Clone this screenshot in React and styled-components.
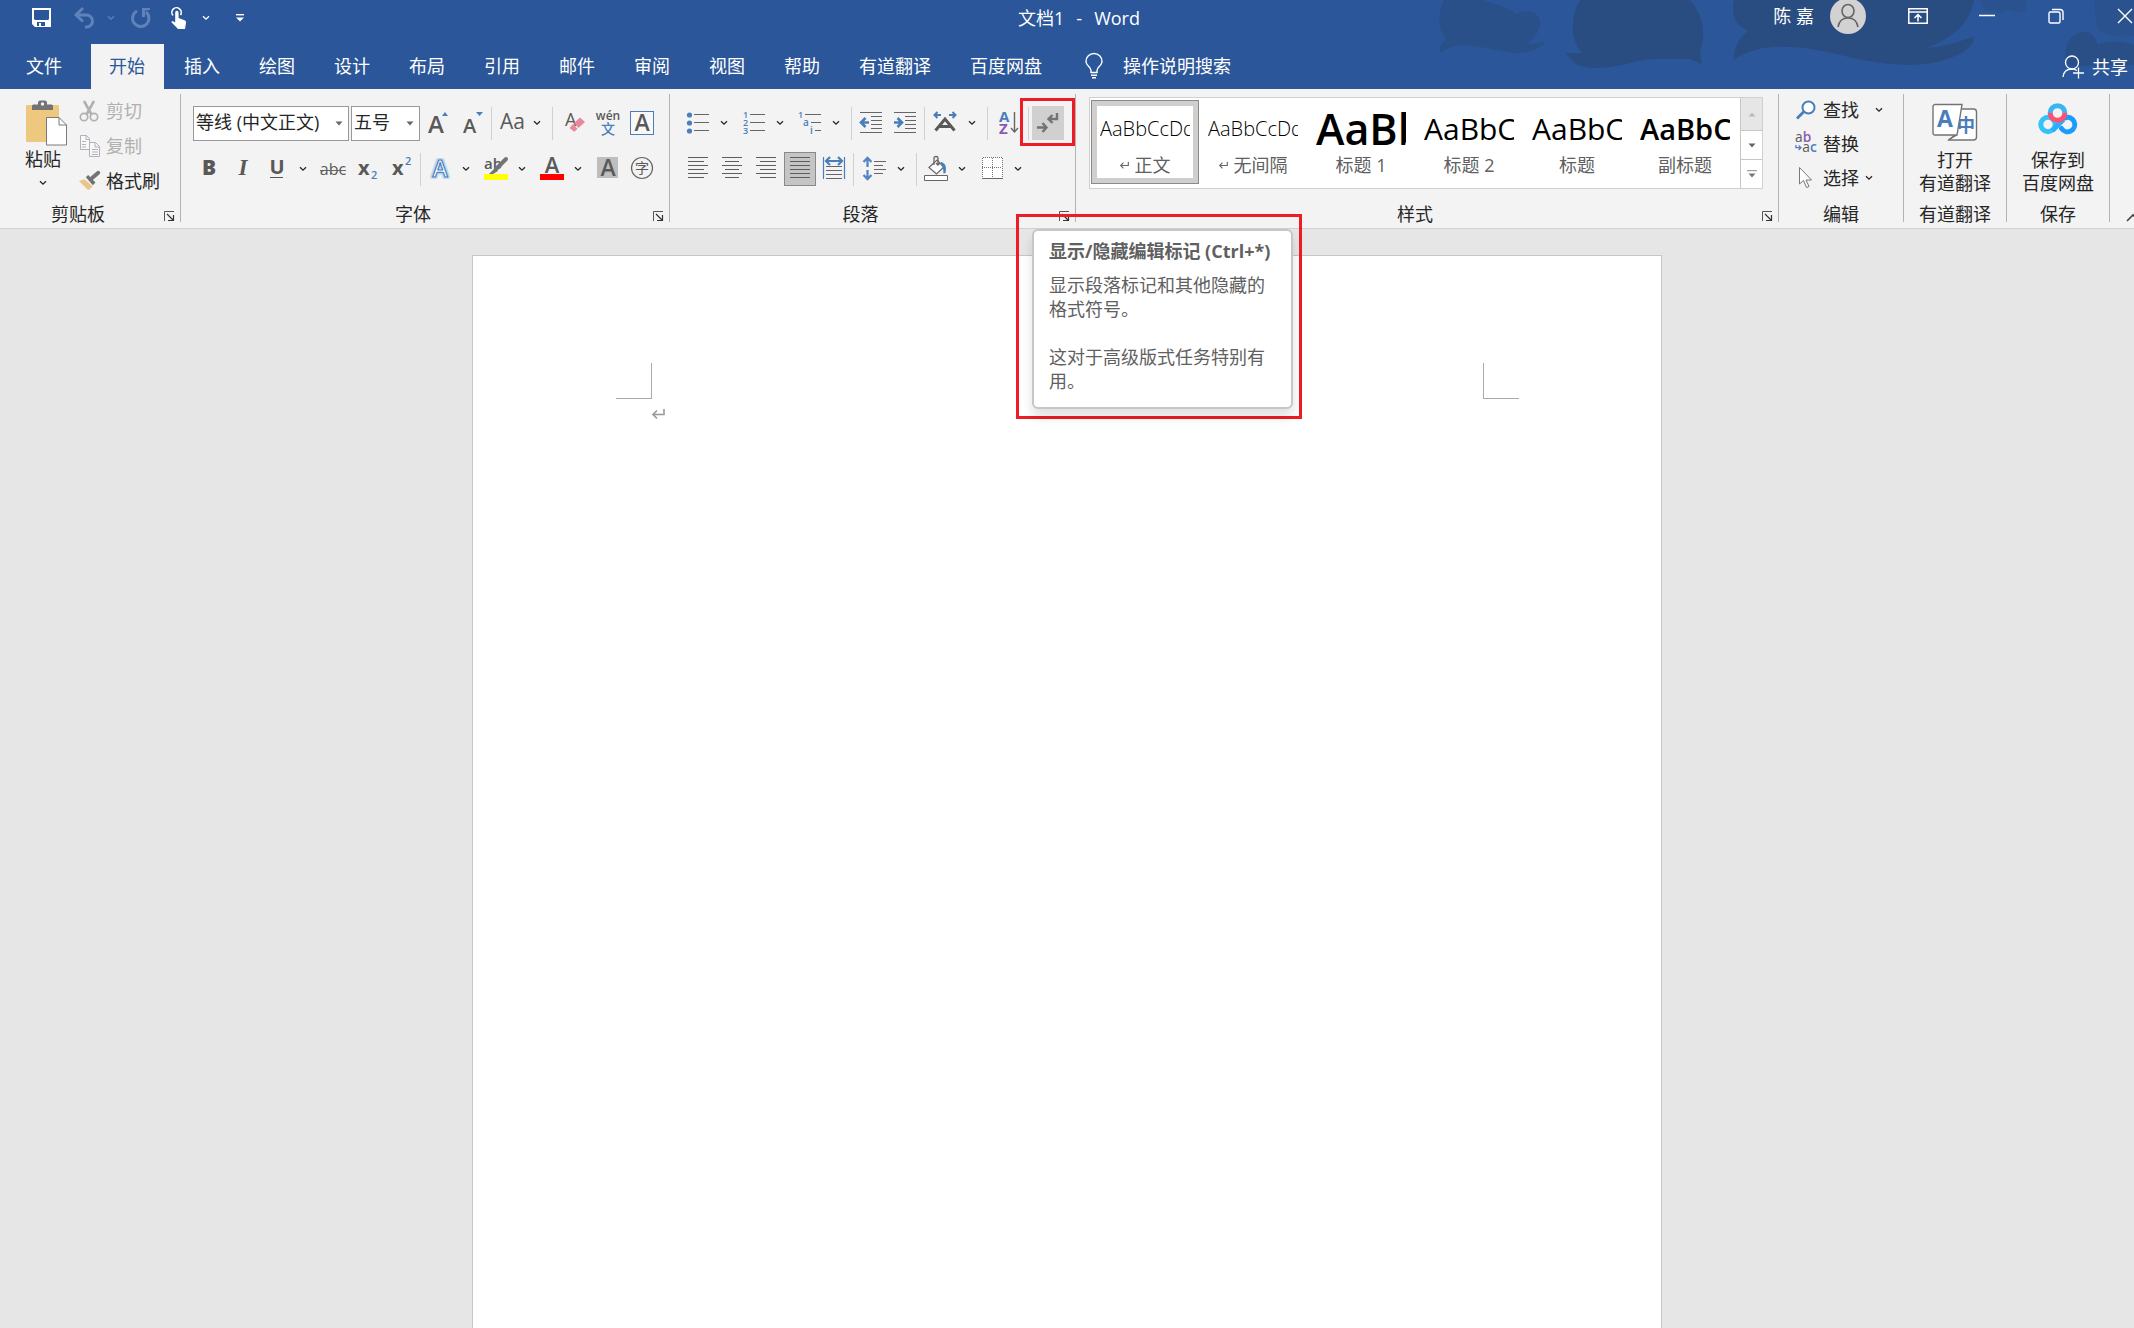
import React from 'react'
import styled, { createGlobalStyle } from 'styled-components'

const TABS = ['插入', '绘图', '设计', '布局', '引用', '邮件', '审阅', '视图', '帮助', '有道翻译', '百度网盘'];

const STYLES = [
    { name: '正文', sample: 'AaBbCcDd', size: 20, weight: 300, mark: true, selected: true },
    { name: '无间隔', sample: 'AaBbCcDd', size: 20, weight: 300, mark: true },
    { name: '标题 1', sample: 'AaBb', size: 43, weight: 600 },
    { name: '标题 2', sample: 'AaBbC', size: 30, weight: 400 },
    { name: '标题', sample: 'AaBbC', size: 30, weight: 400 },
    { name: '副标题', sample: 'AaBbC', size: 29, weight: 600 },
];

const GRAY = '#666666';
const BLUE = '#4a7ebb';

/* ---------- icons ---------- */

function Icon({ w = 24, h = 24, children, ...rest }) {
    return (
        <Svg width={w} height={h} viewBox={`0 0 ${w} ${h}`} fill="none" aria-hidden="true" {...rest}>
            {children}
        </Svg>
    );
}

const ChevronIcon = () => (
    <Icon w={8} h={6}><path d="M1 1.200 4 4.200 7 1.200" stroke="currentColor" strokeWidth="1.300" /></Icon>
);

const CaretIcon = () => (
    <Icon w={8} h={5}><path d="M.5.5h7L4 4.500z" fill="#666" /></Icon>
);

const LauncherIcon = () => (
    <Icon w={12} h={12}>
        <path d="M1.500 11V1.500H11" stroke="#555" />
        <path d="M4 4l6 6M10.500 5v5.500H5" stroke="#333" strokeWidth="1.200" />
    </Icon>
);

const SaveIcon = () => (
    <Icon w={20} h={20}>
        <path fillRule="evenodd" d="M0 0h19v19H3l-3-3zM2 2v9l1 1h13l1-1V2zM5 14v4h2v-3h2v3h4v-4z" fill="#fff" />
    </Icon>
);

const UndoIcon = () => (
    <Icon w={22} h={22}>
        <path d="M2 8h10.500a6 6 0 0 1 0 12H11" stroke="#5f83b8" strokeWidth="3" />
        <path d="M9 1 2 8l7 6.500" stroke="#5f83b8" strokeWidth="3" />
    </Icon>
);

const RedoIcon = () => (
    <Icon w={22} h={22}>
        <path d="M7 4a8.200 8.200 0 1 0 9 1" stroke="#5f83b8" strokeWidth="3" />
        <path d="M12 1h8v2l-5 .5V10h-3z" fill="#5f83b8" />
    </Icon>
);

const TouchIcon = () => (
    <Icon w={18} h={22}>
        <path d="M3 8.500A4.700 4.700 0 1 1 10.500 8" stroke="#fff" strokeWidth="1.600" />
        <path d="M5.200 5.500a1.700 1.700 0 0 1 3.400 0V11l6 2.200c1.200.5 1.600 1.300 1.400 2.600L15 22H8L1.200 15c.8-1.300 2.200-1.100 4 .5z" fill="#fff" />
    </Icon>
);

const CustomizeIcon = () => (
    <Icon w={8} h={8}><path d="M0 .7h8" stroke="#fff" strokeWidth="1.400" /><path d="M0 3.500h8L4 7.500z" fill="#fff" /></Icon>
);

const PersonIcon = () => (
    <Icon w={36} h={36}>
        <circle cx="18" cy="18" r="18" fill="#d2d2d2" />
        <ellipse cx="18" cy="13" rx="6" ry="6.500" stroke="#666" strokeWidth="1.600" />
        <path d="M8 29c1-6 5-9 10-9s9 3 10 9" stroke="#666" strokeWidth="1.600" />
    </Icon>
);

const RibbonOptionsIcon = () => (
    <Icon w={20} h={16}>
        <path d="M.8.8h18.400v14.400H.8zM.8 4h18.400M10 13.500V7M6.500 10 10 6.500l3.500 3.500" stroke="#fff" strokeWidth="1.500" />
    </Icon>
);

const MinimizeIcon = () => (
    <Icon w={16} h={16}><path d="M0 7.500h16" stroke="#fff" strokeWidth="1.500" /></Icon>
);

const RestoreIcon = () => (
    <Icon w={16} h={16}>
        <rect x="1" y="4" width="11" height="11" rx="1.500" stroke="#fff" strokeWidth="1.400" />
        <path d="M4 1.500h8a3 3 0 0 1 3 3V12" stroke="#fff" strokeWidth="1.400" />
    </Icon>
);

const CloseIcon = () => (
    <Icon w={16} h={16}><path d="m1 1 14 14M15 1 1 15" stroke="#fff" strokeWidth="1.400" /></Icon>
);

const BulbIcon = () => (
    <Icon w={18} h={26}>
        <path d="M6 19.500v-2C6 14 1 13 1 8.500a8 8 0 0 1 16 0C17 13 12 14 12 17.500v2zM6 22.200h6M7 24.800h4" stroke="#fff" strokeWidth="1.400" />
    </Icon>
);

const ShareIcon = () => (
    <Icon w={24} h={24}>
        <ellipse cx="10" cy="7.500" rx="6.500" ry="6.500" stroke="#fff" strokeWidth="1.300" />
        <path d="M1 22c.5-5 4-8 9-8 2 0 3.500.5 5 1.500M16.500 12.500v11M11 18h11" stroke="#fff" strokeWidth="1.300" />
    </Icon>
);

const PasteIcon = () => (
    <Icon w={48} h={46}>
        <rect x="7" y="5" width="33" height="37" rx="1" fill="#edc87e" />
        <path d="M13 10V6c0-1 1-1.500 2-1.500h4V2.500c0-1 1-2 2-2h5c1 0 2 1 2 2v2h4c1 0 2 .5 2 1.500v4z" fill="#737373" />
        <circle cx="23.500" cy="4" r="1.700" fill="#f3f3f3" />
        <path d="M27.500 17.500h12.500l7.500 7.500v20h-20z" fill="#fff" stroke="#7a7a7a" />
        <path d="M40 17.500V25h7.500" stroke="#7a7a7a" />
    </Icon>
);

const CutIcon = () => (
    <Icon w={22} h={22}>
        <g stroke="#b1b1b1">
            <circle cx="5" cy="17" r="3.700" strokeWidth="1.700" />
            <circle cx="15" cy="17" r="3.700" strokeWidth="1.700" />
            <path d="M5 1l7.500 13.500M15 1 7.500 14.500" strokeWidth="2.600" />
        </g>
    </Icon>
);

const CopyIcon = () => (
    <Icon w={22} h={22}>
        <g stroke="#b5aebb">
            <path d="M1.500.5h6l3 3v11h-9zM7 .5v4h4M3 6.500h4M3 9.500h4M3 12h4" fill="#f8f8f8" />
            <path d="M10.500 7.500h6l4 4v10h-10z" fill="#f8f8f8" />
            <path d="M16 7.500v4.500h4.500M13 14.500h6M13 17h6M13 19.500h6" />
        </g>
    </Icon>
);

const BrushIcon = () => (
    <Icon w={24} h={22}>
        <path d="M0 11l6-2 9 8-5 4z" fill="#edc487" />
        <path d="M7.500 7 10 4.500l8 8-3 3z" fill="#737373" />
        <path d="m14 8 7-6" stroke="#737373" strokeWidth="4.200" strokeLinecap="round" />
    </Icon>
);

const GrowFontIcon = () => (
    <Icon>
        <Glyph x="2" y="22" $size={24} $weight={600}>A</Glyph>
        <path d="M16 5h6l-3-4z" fill={BLUE} />
    </Icon>
);

const ShrinkFontIcon = () => (
    <Icon>
        <Glyph x="3" y="22" $size={20} $weight={600}>A</Glyph>
        <path d="M16 1h7l-3.500 4z" fill={BLUE} />
    </Icon>
);

const ChangeCaseIcon = () => (
    <Icon w={28}><Glyph x="3" y="18" $size={21}>Aa</Glyph></Icon>
);

const ClearFormatIcon = () => (
    <Icon>
        <Glyph x="3" y="15" $size={18}>A</Glyph>
        <path d="m12 12 6-5.500 5 4.500-6.500 6z" fill="#e8899c" />
        <path d="m11 13 4.500 4.800-2.500 2.500a1 1 0 0 1-1.500 0L7.500 17z" fill="#e8899c" />
    </Icon>
);

const PhoneticIcon = () => (
    <Icon>
        <Glyph x="12" y="9" textAnchor="middle" $size={12} $weight={600}>wén</Glyph>
        <Glyph x="12" y="23" textAnchor="middle" $size={14} $color={BLUE} $weight={500}>文</Glyph>
    </Icon>
);

const CharBorderIcon = () => (
    <Icon>
        <rect x=".5" y=".5" width="23" height="23" fill="#f8f8f8" stroke={BLUE} />
        <Glyph x="12" y="20" textAnchor="middle" $size={23} $weight={600}>A</Glyph>
    </Icon>
);

const BoldIcon = () => <Icon><Glyph x="12" y="18" textAnchor="middle" $size={21} $weight={800}>B</Glyph></Icon>;
const ItalicIcon = () => <Icon><Glyph x="12" y="18" textAnchor="middle" $size={23} $serif $weight={700}>I</Glyph></Icon>;

const UnderlineIcon = () => (
    <Icon>
        <Glyph x="12" y="17" textAnchor="middle" $size={20} $weight={700}>U</Glyph>
        <path d="M5 20.500h13" stroke="#555" />
    </Icon>
);

const StrikeIcon = () => (
    <Icon w={26}>
        <Glyph x="13" y="18" textAnchor="middle" $size={16}>abc</Glyph>
        <path d="M0 13.500h26" stroke={GRAY} />
    </Icon>
);

const SubscriptIcon = () => (
    <Icon>
        <Glyph x="3" y="18" $size={20} $weight={700}>x</Glyph>
        <Glyph x="16" y="22" $size={11} $color={BLUE} $weight={600}>2</Glyph>
    </Icon>
);

const SuperscriptIcon = () => (
    <Icon>
        <Glyph x="3" y="18" $size={20} $weight={700}>x</Glyph>
        <Glyph x="16" y="8" $size={11} $color={BLUE} $weight={600}>2</Glyph>
    </Icon>
);

const TextEffectIcon = () => (
    <Icon>
        <text x="12" y="20" textAnchor="middle" fontFamily="Open Sans" fontSize="23" fontWeight="700" fill="#fff" stroke="#c2daf0" strokeWidth="4" strokeLinejoin="round">
            A
            <tspan x="12" strokeWidth="1.200" stroke={BLUE} fontWeight="600">A</tspan>
        </text>
    </Icon>
);

const HighlightIcon = () => (
    <Icon>
        <Glyph x="0" y="12" $size={15} $weight={600}>ab</Glyph>
        <path d="m22 2-10 10" stroke="#737373" strokeWidth="4" strokeLinecap="round" />
        <path d="m11 11 3 3-5 3H5z" fill="#737373" />
        <path d="M0 17h24v6H0z" fill="#ff0" />
    </Icon>
);

const FontColorIcon = () => (
    <Icon>
        <Glyph x="12" y="16" textAnchor="middle" $size={22} $weight={600}>A</Glyph>
        <path d="M0 17h24v6H0z" fill="red" />
    </Icon>
);

const ShadingTextIcon = () => (
    <Icon>
        <path d="M1 0h21v21H1z" fill="#bebebe" />
        <Glyph x="12" y="19" textAnchor="middle" $size={23} $weight={600}>A</Glyph>
    </Icon>
);

const CircleTextIcon = () => (
    <Icon>
        <circle cx="12" cy="11" r="10.500" stroke={GRAY} strokeWidth="1.200" />
        <Glyph x="12" y="16" textAnchor="middle" $size={14}>字</Glyph>
    </Icon>
);

const BulletsIcon = () => (
    <Icon>
        <g fill={BLUE}><circle cx="3.500" cy="4" r="2.600" /><circle cx="3.500" cy="12" r="2.600" /><circle cx="3.500" cy="20" r="2.600" /></g>
        <path d="M8 3.500h15M8 11.500h15M8 19.500h15" stroke={GRAY} />
    </Icon>
);

const NumberingIcon = () => (
    <Icon>
        <Glyph x="1" y="7" $size={9} $color={BLUE} $weight={600}>1</Glyph>
        <Glyph x="1" y="15" $size={9} $color={BLUE} $weight={600}>2</Glyph>
        <Glyph x="1" y="23" $size={9} $color={BLUE} $weight={600}>3</Glyph>
        <path d="M8 3.500h15M8 11.500h15M8 19.500h15" stroke={GRAY} />
    </Icon>
);

const MultilevelIcon = () => (
    <Icon>
        <Glyph x="0" y="7" $size={9} $color={BLUE} $weight={600}>1</Glyph>
        <Glyph x="5" y="15" $size={10} $color={BLUE} $weight={600}>a</Glyph>
        <Glyph x="12" y="23" $size={10} $color={BLUE} $weight={600}>i</Glyph>
        <path d="M7 3.500h16M13 11.500h10M17 19.500h6" stroke={GRAY} />
    </Icon>
);

const OutdentIcon = () => (
    <Icon>
        <path d="M1 1.500h22M12 5.500h11M12 9.500h11M12 13.500h11M12 17.500h11M1 21.500h22" stroke={GRAY} />
        <path d="M10 11.500H2M6.500 7 2 11.500 6.500 16" stroke={BLUE} strokeWidth="2.600" />
    </Icon>
);

const IndentIcon = () => (
    <Icon>
        <path d="M1 1.500h22M12 5.500h11M12 9.500h11M12 13.500h11M12 17.500h11M1 21.500h22" stroke={GRAY} />
        <path d="M1 11.500h8M4.500 7 9 11.500 4.500 16" stroke={BLUE} strokeWidth="2.600" />
    </Icon>
);

const AsianLayoutIcon = () => (
    <Icon>
        <path d="M2.500 19.500 12 8l9.500 11.500M6 15.500h12" stroke="#595959" strokeWidth="3" />
        <path d="M8 4H1.500M4.500 1l-3 3 3 3M16 4h6.500M19.500 1l3 3-3 3" stroke={BLUE} strokeWidth="2" />
    </Icon>
);

const SortIcon = () => (
    <Icon>
        <Glyph x="3" y="11" $size={15} $color={BLUE} $weight={700}>A</Glyph>
        <Glyph x="3" y="23" $size={15} $color="#8a5ab0" $weight={700}>Z</Glyph>
        <path d="M18.500 1v20M15 17l3.500 4 3.500-4" stroke={GRAY} strokeWidth="1.400" />
    </Icon>
);

const MarksIcon = () => (
    <Icon>
        <path d="M21 2v6h-8M16.500 4 12.500 8l4 4" stroke="#737373" strokeWidth="2.400" />
        <path d="M1 16.500h9M6.500 12l4 4.500-4 4.500" stroke="#737373" strokeWidth="2.400" />
    </Icon>
);

const ALIGN = {
    left: [[2, 22], [2, 18], [2, 22], [2, 18], [2, 22], [2, 18]],
    center: [[2, 22], [5, 19], [2, 22], [5, 19], [2, 22], [5, 19]],
    right: [[2, 22], [6, 22], [2, 22], [6, 22], [2, 22], [6, 22]],
    justify: [[2, 22], [2, 22], [2, 22], [2, 22], [2, 22], [2, 22]],
};

function AlignIcon({ type }) {
    const d = ALIGN[type].map(([a, b], i) => `M${a} ${i * 4 + 0.5}H${b}`).join('');
    return <Icon><path d={d} stroke="#5e5e5e" /></Icon>;
}

const DistributeIcon = () => (
    <Icon>
        <path d="M1.500 0v22M22.500 0v22" stroke={BLUE} strokeWidth="1.200" />
        <path d="M4 4h16M8 0 4 4l4 4M16 0l4 4-4 4" stroke={BLUE} strokeWidth="2.200" />
        <path d="M4 9.500h16M4 13.500h16M4 17.500h16M4 21.500h16" stroke={GRAY} />
    </Icon>
);

const LineSpacingIcon = () => (
    <Icon>
        <path d="M5.500 1v9M1.500 5l4-4 4 4M5.500 13v9M1.500 18l4 4 4-4" stroke="#5585c8" strokeWidth="2.300" />
        <path d="M12 4.500h12M12 8.500h9M12 12.500h12M12 16.500h9" stroke={GRAY} />
    </Icon>
);

const BucketIcon = () => (
    <Icon w={26} h={26}>
        <path d="M6 11.500 14 4l7 7-7.500 7z" fill="#fff" stroke={GRAY} strokeWidth="1.200" />
        <path d="M11 9V2c0-2 4-2 4 0v6M13 7l2 2 2-2" stroke={GRAY} strokeWidth="1.300" />
        <path d="M18 6c4 1 6 4 4.500 11l-2 .5c-.5-2 .8-5-3-9z" fill={BLUE} />
        <path d="M1.500 19.500h23v5h-23z" fill="#fff" stroke={GRAY} />
    </Icon>
);

const BordersIcon = () => (
    <Icon>
        <path d="M2 1h20v20H2z" fill="#fff" />
        <path d="M2.500 20V.5h20V20M12.500 1v20M2 10.500h20" stroke="#777" strokeDasharray="1 1" />
        <path d="M2 21.500h21" stroke="#666" />
    </Icon>
);

const FindIcon = () => (
    <Icon w={22} h={20}>
        <circle cx="13.500" cy="7.500" r="6" fill="#fff" stroke={BLUE} strokeWidth="2" />
        <path d="m9 11.500-7 7" stroke={BLUE} strokeWidth="2.800" />
    </Icon>
);

const ReplaceIcon = () => (
    <Icon w={24} h={22}>
        <Glyph x="0" y="9" $size={15}>a<tspan fill="#8a5ab0" fontWeight="600">b</tspan></Glyph>
        <Glyph x="8" y="20" $size={15}>a<tspan fill={BLUE} fontWeight="600">c</tspan></Glyph>
        <path d="M1 12v3h5M4 12.500 6.500 15 4 17.500" stroke={BLUE} strokeWidth="1.400" />
    </Icon>
);

const SelectIcon = () => (
    <Icon w={22} h={22}>
        <path d="M4.500.5v16.500l4-3.500 3 7 2.500-1-3-6.500h5.500z" fill="#fff" stroke="#777" />
    </Icon>
);

const YoudaoIcon = () => (
    <Icon w={46} h={40}>
        <path d="M24 6h17.500c2 0 3 1 3 3v25c0 2-1 3-3 3H17l9-8" fill="#fff" stroke="#737373" strokeWidth="1.400" />
        <Glyph x="25" y="29" $size={18} $color={BLUE} $weight={700}>中</Glyph>
        <path d="M3 1.500h27L25 32H3c-1.500 0-2-1-2-2V3.500c0-1 .8-2 2-2zM17 37v-.5l8-4.500" fill="#fff" stroke="#737373" strokeWidth="1.400" />
        <Glyph x="5" y="24" $size={23} $color={BLUE} $weight={700}>A</Glyph>
    </Icon>
);

const BaiduIcon = () => (
    <Icon w={40} h={32}>
        <path d="M12.200 10a7.300 7.300 0 0 1 14.600 0" stroke="#3ab4f2" strokeWidth="5" />
        <circle cx="10" cy="21.500" r="7.200" stroke="#33c3fb" strokeWidth="5" />
        <path d="M23.500 25.500a7.200 7.200 0 1 0 3.500-10.700" stroke="#1a9cff" strokeWidth="5" strokeLinecap="round" />
        <path d="m14.500 27.500 11-11" stroke="#29aefc" strokeWidth="5" />
        <path d="M12.200 10a7.300 7.300 0 0 0 14.600 0" stroke="#ff5273" strokeWidth="5" />
    </Icon>
);

const ReturnMark = ({ w = 13, color = '#999' }) => (
    <Svg width={w} height={w} viewBox="0 0 13 13" fill="none" aria-hidden="true">
        <path d="M12 1v5.500H1M5 2.500l-4 4 4 4" stroke={color} strokeWidth="1.600" />
    </Svg>
);

const Clouds = () => (
    <CloudArt width="714" height="89" viewBox="0 0 714 89" aria-hidden="true">
        <g fill="#2a4d81">
            <path opacity=".65" d="M24 0c-8 16-5 32 2 39-5 5-7 8-6 14 20-16 50-2 76 0 13 0 24-3 30-12-6 1-12 3-20 3 14-8 18-24 10-30-8-4-14-3-20 0C90 8 76 4 62 0z" />
            <path d="M160 0c-8 14-12 36 2 53-6 1-12 0-16-1 4 11 16 17 30 16 22 0 40-8 58-9h36l12 6-2-14c6-16 4-36-10-51z" />
            <path d="M314 0c-4 16 4 28 14 31-10 8-14 16-14 29 30-22 80-12 118-2 28 6 66 11 92 2 20-6 30-14 30-23-12 3-28 10-48 11 24-8 44-24 48-48z" />
            <path opacity=".8" d="M650 66c-10-14-2-34 14-34 10 0 12 8 14 13 10-5 24-4 36 0v20z" />
            <path opacity=".5" d="M560 0c2 10 8 14 14 10 4 6 10 3 14 0 6 2 12 4 18 0V0zM674 0c2 14 0 26 8 32 10 5 20 5 32 4V0z" />
        </g>
    </CloudArt>
);

/* ---------- small building blocks ---------- */

function Menu({ label }) {
    return <MenuButton type="button" aria-label={label}><ChevronIcon /></MenuButton>;
}

function Footer({ children, launcher }) {
    return (
        <GroupFooter>
            <GroupLabel>{children}</GroupLabel>
            {launcher && <Launcher type="button" aria-label={`${children}设置`}><LauncherIcon /></Launcher>}
        </GroupFooter>
    );
}

function Combo({ label, options, width }) {
    return (
        <ComboBox $width={width}>
            <select aria-label={label}>
                {options.map(option => <option key={option}>{option}</option>)}
            </select>
            <CaretIcon />
        </ComboBox>
    );
}

function TitleBar() {
    return (
        <TitleRow>
            <QuickAccess>
                <QuickButton type="button" aria-label="保存" $width={42}><SaveIcon /></QuickButton>
                <QuickButton type="button" aria-label="撤消" $width={44}><UndoIcon /></QuickButton>
                <QuickButton type="button" aria-label="撤消列表" $width={8} $dim><ChevronIcon /></QuickButton>
                <QuickButton type="button" aria-label="恢复" $width={52}><RedoIcon /></QuickButton>
                <QuickButton type="button" aria-label="触摸/鼠标模式" $width={24}><TouchIcon /></QuickButton>
                <QuickButton type="button" aria-label="模式列表" $width={30}><ChevronIcon /></QuickButton>
                <QuickButton type="button" aria-label="自定义快速访问工具栏" $width={38}><CustomizeIcon /></QuickButton>
            </QuickAccess>
            <Title><span>文档1</span><span>-</span><span>Word</span></Title>
            <WindowControls>
                <Account type="button">陈 嘉<PersonIcon /></Account>
                <WindowButton type="button" aria-label="功能区显示选项"><RibbonOptionsIcon /></WindowButton>
                <WindowButton type="button" aria-label="最小化"><MinimizeIcon /></WindowButton>
                <WindowButton type="button" aria-label="向下还原"><RestoreIcon /></WindowButton>
                <WindowButton type="button" aria-label="关闭"><CloseIcon /></WindowButton>
            </WindowControls>
        </TitleRow>
    );
}

function TabBar() {
    return (
        <TabRow>
            <FileTab type="button">文件</FileTab>
            <Tab type="button" $active>开始</Tab>
            {TABS.map(tab => <Tab type="button" key={tab}>{tab}</Tab>)}
            <TellMe>
                <BulbIcon />
                <input aria-label="操作说明搜索" placeholder="操作说明搜索" />
            </TellMe>
            <Share type="button"><ShareIcon />共享</Share>
        </TabRow>
    );
}

function ClipboardGroup() {
    return (
        <Group>
            <ClipboardBody>
                <PasteButton type="button">
                    <PasteIcon />
                    <span>粘贴</span>
                    <ChevronIcon />
                </PasteButton>
                <Stack>
                    <TextButton type="button" disabled><CutIcon />剪切</TextButton>
                    <TextButton type="button" disabled><CopyIcon />复制</TextButton>
                    <TextButton type="button"><BrushIcon />格式刷</TextButton>
                </Stack>
            </ClipboardBody>
            <Footer launcher>剪贴板</Footer>
        </Group>
    );
}

function FontGroup() {
    return (
        <Group>
            <Rows>
                <ToolRow>
                    <Combo label="字体" width={156} options={['等线 (中文正文)']} />
                    <Combo label="字号" width={69} options={['五号']} />
                    <Tool type="button" aria-label="增大字号"><GrowFontIcon /></Tool>
                    <Tool type="button" aria-label="减小字号"><ShrinkFontIcon /></Tool>
                    <Divider />
                    <Tool type="button" aria-label="更改大小写"><ChangeCaseIcon /></Tool>
                    <Menu label="更改大小写列表" />
                    <Divider />
                    <ToolEnd>
                        <Tool type="button" aria-label="清除所有格式"><ClearFormatIcon /></Tool>
                        <Tool type="button" aria-label="拼音指南"><PhoneticIcon /></Tool>
                        <Tool type="button" aria-label="字符边框"><CharBorderIcon /></Tool>
                    </ToolEnd>
                </ToolRow>
                <ToolRow>
                    <Tool type="button" aria-label="加粗"><BoldIcon /></Tool>
                    <Tool type="button" aria-label="倾斜"><ItalicIcon /></Tool>
                    <Tool type="button" aria-label="下划线"><UnderlineIcon /></Tool>
                    <Menu label="下划线列表" />
                    <Tool type="button" aria-label="删除线"><StrikeIcon /></Tool>
                    <Tool type="button" aria-label="下标"><SubscriptIcon /></Tool>
                    <Tool type="button" aria-label="上标"><SuperscriptIcon /></Tool>
                    <Divider />
                    <Tool type="button" aria-label="文本效果"><TextEffectIcon /></Tool>
                    <Menu label="文本效果列表" />
                    <Tool type="button" aria-label="突出显示"><HighlightIcon /></Tool>
                    <Menu label="突出显示颜色" />
                    <Tool type="button" aria-label="字体颜色"><FontColorIcon /></Tool>
                    <Menu label="字体颜色列表" />
                    <Tool type="button" aria-label="字符底纹"><ShadingTextIcon /></Tool>
                    <Tool type="button" aria-label="带圈字符"><CircleTextIcon /></Tool>
                </ToolRow>
            </Rows>
            <Footer launcher>字体</Footer>
        </Group>
    );
}

function ParagraphGroup() {
    return (
        <Group>
            <Rows>
                <ToolRow>
                    <Tool type="button" aria-label="项目符号"><BulletsIcon /></Tool>
                    <Menu label="项目符号列表" />
                    <Tool type="button" aria-label="编号"><NumberingIcon /></Tool>
                    <Menu label="编号列表" />
                    <Tool type="button" aria-label="多级列表"><MultilevelIcon /></Tool>
                    <Menu label="多级列表选项" />
                    <Divider />
                    <Tool type="button" aria-label="减少缩进量"><OutdentIcon /></Tool>
                    <Tool type="button" aria-label="增加缩进量"><IndentIcon /></Tool>
                    <Divider />
                    <Tool type="button" aria-label="中文版式" $width={36}><AsianLayoutIcon /></Tool>
                    <Menu label="中文版式列表" />
                    <Divider />
                    <Tool type="button" aria-label="排序" $width={36}><SortIcon /></Tool>
                    <Divider />
                    <MarksAnchor>
                        <Tool type="button" aria-label="显示/隐藏编辑标记" $hover><MarksIcon /></Tool>
                        <MarksFrame />
                        <TipFrame>
                            <Tip role="tooltip">
                                <h2>显示/隐藏编辑标记 (Ctrl+*)</h2>
                                <p>显示段落标记和其他隐藏的格式符号。</p>
                                <p>这对于高级版式任务特别有用。</p>
                            </Tip>
                        </TipFrame>
                    </MarksAnchor>
                </ToolRow>
                <ToolRow>
                    <Tool type="button" aria-label="左对齐"><AlignIcon type="left" /></Tool>
                    <Tool type="button" aria-label="居中"><AlignIcon type="center" /></Tool>
                    <Tool type="button" aria-label="右对齐"><AlignIcon type="right" /></Tool>
                    <Tool type="button" aria-label="两端对齐" aria-pressed="true" $pressed><AlignIcon type="justify" /></Tool>
                    <Tool type="button" aria-label="分散对齐"><DistributeIcon /></Tool>
                    <Divider />
                    <Tool type="button" aria-label="行和段落间距" $width={36}><LineSpacingIcon /></Tool>
                    <Menu label="行和段落间距列表" />
                    <Divider />
                    <Tool type="button" aria-label="底纹"><BucketIcon /></Tool>
                    <Menu label="底纹颜色" />
                    <Tool type="button" aria-label="边框"><BordersIcon /></Tool>
                    <Menu label="边框列表" />
                </ToolRow>
            </Rows>
            <Footer launcher>段落</Footer>
        </Group>
    );
}

function StylesGroup() {
    return (
        <Group $grow>
            <Gallery>
                <StyleList>
                    {STYLES.map(item => (
                        <StyleItem type="button" key={item.name} $selected={item.selected}>
                            <Sample $size={item.size} $weight={item.weight}>{item.sample}</Sample>
                            <StyleName>{item.mark && <ReturnMark w={9} color="#666" />}{item.name}</StyleName>
                        </StyleItem>
                    ))}
                </StyleList>
                <GalleryScroll>
                    <button type="button" aria-label="上一行" disabled>
                        <Icon w={8} h={5}><path d="M.5 4.500h7L4 .5z" fill="#bbb" /></Icon>
                    </button>
                    <button type="button" aria-label="下一行"><CaretIcon /></button>
                    <button type="button" aria-label="其他">
                        <Icon w={10} h={8}><path d="M0 .7h10" stroke="#888" /><path d="M1.500 3.500h7L5 7.500z" fill="#777" /></Icon>
                    </button>
                </GalleryScroll>
            </Gallery>
            <Footer launcher>样式</Footer>
        </Group>
    );
}

function App() {
    return (
        <>
            <GlobalStyle />
            <Window>
                <Header>
                    <Clouds />
                    <TitleBar />
                    <TabBar />
                </Header>
                <Ribbon>
                    <ClipboardGroup />
                    <FontGroup />
                    <ParagraphGroup />
                    <StylesGroup />
                    <Group>
                        <EditStack>
                            <TextButton type="button"><FindIcon />查找<Wide><ChevronIcon /></Wide></TextButton>
                            <TextButton type="button"><ReplaceIcon />替换</TextButton>
                            <TextButton type="button"><SelectIcon />选择<ChevronIcon /></TextButton>
                        </EditStack>
                        <Footer>编辑</Footer>
                    </Group>
                    <Group>
                        <BigButton type="button"><YoudaoIcon /><span>打开<br />有道翻译</span></BigButton>
                        <Footer>有道翻译</Footer>
                    </Group>
                    <Group>
                        <BigButton type="button"><BaiduIcon /><span>保存到<br />百度网盘</span></BigButton>
                        <Footer>保存</Footer>
                    </Group>
                    <Collapse type="button" aria-label="折叠功能区">
                        <Icon w={14} h={9}><path d="m1 8 6-6 6 6" stroke="#444" strokeWidth="1.600" /></Icon>
                    </Collapse>
                </Ribbon>
                <Workspace>
                    <Page>
                        <Corners><Corner $side="right" /><Corner $side="left" /></Corners>
                        <Paragraph><ReturnMark /></Paragraph>
                    </Page>
                </Workspace>
            </Window>
        </>
    );
}

export default App

const GlobalStyle = createGlobalStyle`
    * {
        box-sizing: border-box;
    }
    body {
        margin: 0;
        overflow: hidden;
        font: 18px/24px "Open Sans", "Noto Sans CJK SC", sans-serif;
        color: #262626;
    }
    button, select, input {
        font: inherit;
        color: inherit;
        background: none;
        border: 0;
        padding: 0;
        margin: 0;
    }
`;

const Svg = styled.svg`
    display: block;
    flex: none;
    overflow: visible;
`;

const Glyph = styled.text`
    font-family: ${props => props.$serif ? '"Liberation Serif", serif' : '"Open Sans", "Noto Sans CJK SC", sans-serif'};
    font-style: ${props => props.$serif ? 'italic' : 'normal'};
    font-size: ${props => props.$size}px;
    font-weight: ${props => props.$weight || 400};
    fill: ${props => props.$color || '#595959'};
`;

const Window = styled.div`
    display: flex;
    flex-direction: column;
    height: 100vh;
`;

const Header = styled.header`
    position: relative;
    background: #2b579a;
    color: #fff;
`;

const CloudArt = styled.svg`
    position: absolute;
    top: 0;
    right: 0;
`;

const TitleRow = styled.div`
    position: relative;
    display: grid;
    grid-template-columns: 1fr auto 1fr;
    height: 44px;
`;

const QuickAccess = styled.div`
    display: flex;
    align-items: center;
    height: 36px;
    padding-left: 21px;
`;

const QuickButton = styled.button`
    display: flex;
    align-items: center;
    justify-content: center;
    width: ${props => props.$width}px;
    height: 32px;
    color: ${props => props.$dim ? '#5f83b8' : '#fff'};
`;

const Title = styled.div`
    display: flex;
    gap: 12px;
    padding: 6px 0 0 24px;
`;

const WindowControls = styled.div`
    display: flex;
    justify-content: flex-end;
    height: 32px;
    align-items: center;
    margin-right: -25px;
`;

const Account = styled.button`
    display: flex;
    align-items: center;
    gap: 16px;
    margin-right: 17px;
`;

const WindowButton = styled.button`
    display: flex;
    align-items: center;
    justify-content: center;
    width: 69px;
    height: 32px;
`;

const TabRow = styled.nav`
    position: relative;
    display: flex;
    gap: 2px;
    height: 45px;
    padding-left: 8px;
`;

const Tab = styled.button`
    flex: none;
    padding: 0 19px 2px 18px;
    background: ${props => props.$active ? '#f3f3f3' : 'transparent'};
    color: ${props => props.$active ? '#2b579a' : '#fff'};
`;

const FileTab = styled(Tab)`
    margin-right: 8px;
`;

const TellMe = styled.label`
    display: flex;
    align-items: center;
    gap: 20px;
    margin-left: 22px;
    padding-bottom: 2px;
    > input {
        width: 130px;
        outline: none;
    }
    > input::placeholder {
        color: #fff;
        opacity: 1;
    }
`;

const Share = styled.button`
    display: flex;
    align-items: center;
    gap: 6px;
    margin-left: auto;
    padding-right: 6px;
`;

const Ribbon = styled.section`
    position: relative;
    z-index: 1;
    display: flex;
    flex: none;
    height: 140px;
    padding: 5px 0 6px;
    background: #f3f3f3;
    border-bottom: 1px solid #d0d0d0;
`;

const Group = styled.div`
    display: flex;
    flex-direction: column;
    flex: ${props => props.$grow ? '1 1 0' : 'none'};
    min-width: 0;
    border-right: 1px solid #b3b3b3;
`;

const GroupFooter = styled.div`
    display: flex;
    align-items: center;
    height: 16px;
    margin-top: auto;
`;

const GroupLabel = styled.div`
    flex: 1;
    text-align: center;
`;

const Launcher = styled.button`
    width: 24px;
    padding: 4px 0 0 7px;
`;

const ClipboardBody = styled.div`
    display: flex;
    gap: 12px;
    padding: 0 20px 0 19px;
`;

const PasteButton = styled.button`
    display: flex;
    flex-direction: column;
    align-items: center;
    width: 48px;
    padding-top: 6px;
    > span {
        margin: 1px 0 9px;
    }
`;

const Stack = styled.div`
    display: flex;
    flex-direction: column;
`;

const EditStack = styled(Stack)`
    padding: 0 20px 0 16px;
`;

const TextButton = styled.button`
    display: flex;
    align-items: center;
    gap: 5px;
    height: 35px;
    padding-bottom: 2px;
    color: ${props => props.disabled ? '#b1b1b1' : 'inherit'};
    > svg:first-child {
        width: 22px;
    }
    ${EditStack} & {
        gap: 6px;
        height: 34px;
    }
`;

const Wide = styled.span`
    padding-left: 10px;
`;

const Rows = styled.div`
    display: flex;
    flex-direction: column;
    gap: 12px;
    padding: 12px 10px 0 11px;
`;

const ToolRow = styled.div`
    display: flex;
    align-items: center;
    height: 34px;
`;

const Tool = styled.button`
    display: flex;
    align-items: center;
    justify-content: center;
    flex: none;
    width: ${props => (props.$width || 34) - 2}px;
    height: 34px;
    margin: 0 1px;
    background: ${props => props.$pressed ? '#c5c5c5' : props.$hover ? '#d0d0d0' : 'transparent'};
    border: ${props => props.$pressed ? '1px solid #8a8a8a' : '0'};
`;

const ToolEnd = styled.div`
    display: flex;
    margin-left: auto;
`;

const MenuButton = styled.button`
    display: flex;
    align-items: center;
    justify-content: center;
    width: 18px;
    height: 34px;
    margin-right: 4px;
`;

const Divider = styled.span`
    width: 1px;
    height: 33px;
    margin: 0 2px;
    background: #d0d0d0;
`;

const ComboBox = styled.div`
    position: relative;
    display: flex;
    align-items: center;
    width: ${props => props.$width}px;
    margin: 0 1px;
    > select {
        appearance: none;
        width: 100%;
        height: 35px;
        padding: 0 0 2px 2px;
        background: #fff;
        border: 1px solid #999;
    }
    > svg {
        position: absolute;
        right: 6px;
        pointer-events: none;
    }
`;

const MarksAnchor = styled.div`
    position: relative;
`;

const MarksFrame = styled.div`
    position: absolute;
    inset: -8px -10px -6px -11px;
    border: 3px solid #ee1c24;
    pointer-events: none;
`;

const TipFrame = styled.div`
    position: absolute;
    top: 108px;
    left: -15px;
    padding: 12px 6px 7px 13px;
    border: 3px solid #ee1c24;
`;

const Tip = styled.div`
    width: 261px;
    height: 180px;
    padding: 8px 15px;
    background: #fff;
    border: 2px solid #c6c6c6;
    border-radius: 6px;
    box-shadow: 0 8px 12px rgba(0, 0, 0, 0.12);
    color: #606060;
    > h2 {
        margin: 0 0 10px;
        font-size: 18px;
        font-weight: 700;
        white-space: nowrap;
    }
    > p {
        margin: 0 0 24px;
    }
`;

const Gallery = styled.div`
    display: flex;
    height: 92px;
    margin: 3px 15px 0 13px;
    background: #fff;
    border: 1px solid #d0d0d0;
`;

const StyleList = styled.div`
    display: flex;
    flex: 1;
    min-width: 0;
    padding: 2px 1px;
    overflow: hidden;
`;

const StyleItem = styled.button`
    display: flex;
    flex-direction: column;
    flex: none;
    width: 108px;
    height: 84px;
    padding: ${props => props.$selected ? '0 8px' : '1px 9px'};
    border: ${props => props.$selected ? '1px solid #8a8a88' : '0'};
    box-shadow: ${props => props.$selected ? 'inset 0 0 0 5px #d0cfcd' : 'none'};
`;

const Sample = styled.span`
    width: 90px;
    height: 52px;
    line-height: 56px;
    overflow: hidden;
    white-space: nowrap;
    text-align: left;
    color: #000;
    font-size: ${props => props.$size}px;
    font-weight: ${props => props.$weight};
`;

const StyleName = styled.span`
    display: flex;
    align-items: center;
    justify-content: center;
    gap: 6px;
    line-height: 24px;
    color: #606060;
`;

const GalleryScroll = styled.div`
    display: grid;
    grid-template-rows: 32px 1fr 1fr;
    width: 22px;
    border-left: 1px solid #c6c6c6;
    > button {
        display: flex;
        align-items: center;
        justify-content: center;
    }
    > button + button {
        border-top: 1px solid #c6c6c6;
    }
    > button:disabled {
        background: #e6e6e6;
    }
`;

const BigButton = styled.button`
    display: flex;
    flex-direction: column;
    align-items: center;
    justify-content: space-between;
    height: 101px;
    padding: 9px 15px 0;
    line-height: 23px;
`;

const Collapse = styled.button`
    display: flex;
    align-items: flex-end;
    justify-content: flex-end;
    flex: none;
    width: 30px;
    margin-right: -6px;
    overflow: hidden;
`;

const Workspace = styled.main`
    flex: 1;
    display: flex;
    justify-content: center;
    padding-top: 26px;
    overflow: hidden;
    background: #e6e6e6;
`;

const Page = styled.article`
    flex: 0 1 1190px;
    padding: 107px 142px 0 143px;
    background: #fff;
    border: 1px solid #c6c6c6;
    border-bottom: 0;
`;

const Corners = styled.div`
    display: flex;
    justify-content: space-between;
`;

const Corner = styled.span`
    width: 36px;
    height: 36px;
    border-bottom: 1px solid #aaa;
    border-${props => props.$side}: 1px solid #aaa;
`;

const Paragraph = styled.div`
    padding: 9px 36px;
`;
